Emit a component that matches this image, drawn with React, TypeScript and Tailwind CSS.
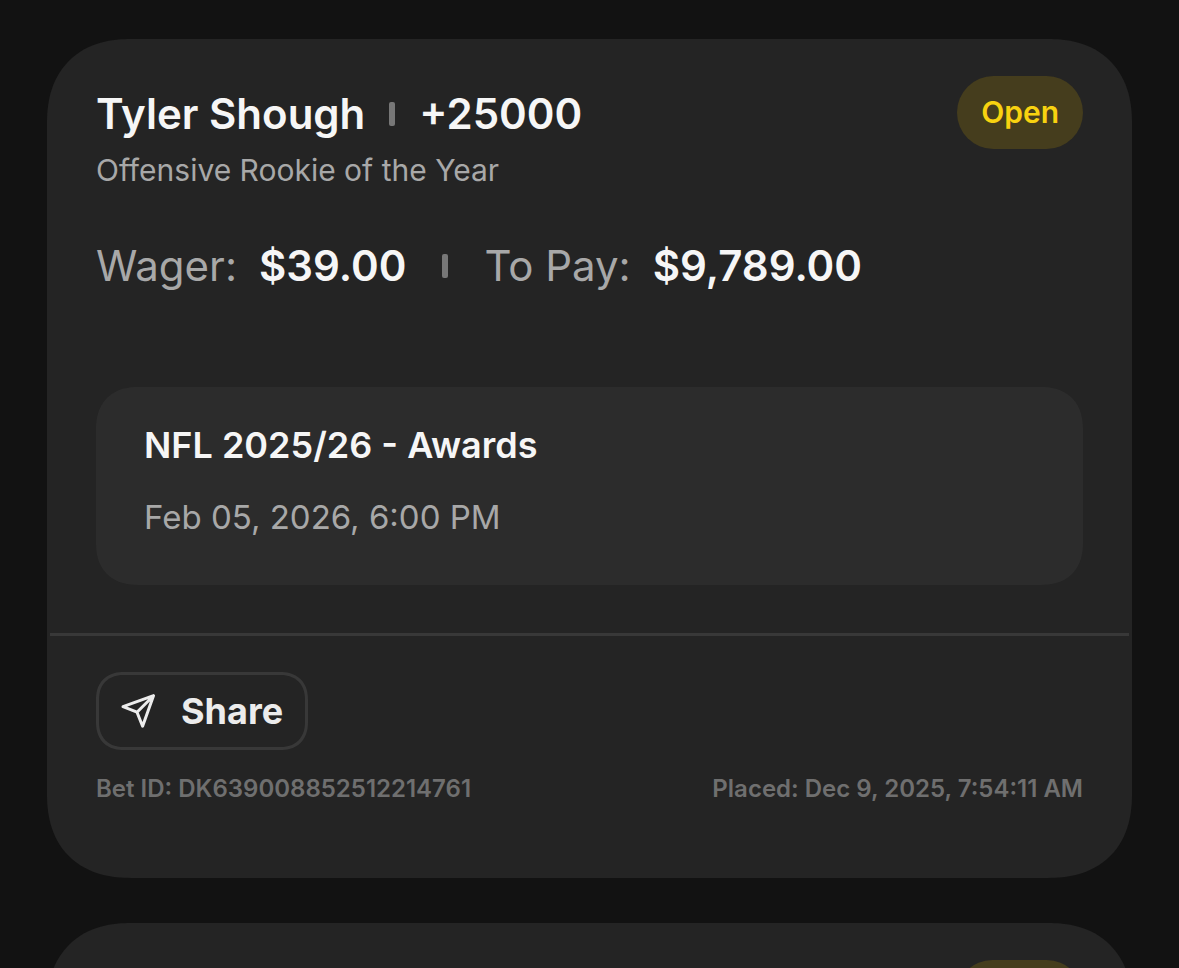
export default function App() {
  return (
    <main className="h-screen overflow-hidden bg-[#121212] px-[47px] pt-[39px] font-['Inter',sans-serif] text-[#f6f6f6]">
      <div className="flex flex-col gap-[45px]">
        <article className="rounded-[84px] bg-[#242424] pb-[74px] [corner-shape:superellipse(1.2)]">
          <div className="px-[49px] pt-[37px]">
            <header className="flex items-start justify-between">
              <div className="pt-3">
                <h2 className="flex items-center text-[42px] leading-[52px] font-semibold">
                  Tyler Shough
                  <span className="mx-6 h-6 w-1.5 rounded-xs bg-[#777777]" />
                  +25000
                </h2>
                <p className="mt-3 text-[30px] leading-9 text-[#a8a8a8]">Offensive Rookie of the Year</p>
              </div>
              <span className="rounded-full bg-[#453d1d] px-6 py-[18px] text-[30px] leading-[37px] font-semibold text-[#f8d210]">Open</span>
            </header>
            <dl className="mt-[52px] flex items-center text-[42px] leading-[52px]">
              <dt className="text-[#a8a8a8]">Wager:</dt>
              <dd className="ml-[22px] font-semibold">$39.00</dd>
              <span className="mx-9 h-6 w-1.5 rounded-xs bg-[#777777]" />
              <dt className="text-[#a8a8a8]">To Pay:</dt>
              <dd className="ml-[22px] font-semibold">$9,789.00</dd>
            </dl>
            <section className="mt-[95px] rounded-[42px] bg-[#2c2c2c] px-12 pt-9 pb-[44px] [corner-shape:superellipse(1.2)]">
              <h3 className="text-[36px] leading-[44px] font-semibold">NFL 2025/26 - Awards</h3>
              <p className="mt-[26px] text-[33px] leading-[48px] text-[#a8a8a8]">Feb 05, 2026, 6:00 PM</p>
            </section>
          </div>
          <hr className="mx-[3px] mt-12 border-t-[3px] border-[#383838]" />
          <footer className="px-[49px] pt-9">
            <button className="flex h-[78px] items-center gap-6 rounded-[28px] border-3 border-[#383838] px-[22px] text-[36px] font-bold text-[#ececec] [corner-shape:superellipse(1.2)]">
              <svg className="size-9" viewBox="0 0 36 36" fill="none" stroke="currentColor" strokeWidth="3" strokeLinejoin="round" strokeLinecap="round">
                <path d="M32.5 2.7 2 13.7l14 5.5 5.6 14Z M32.5 2.7 16 19.2" />
              </svg>
              Share
            </button>
            <div className="mt-6 flex justify-between text-[24px] leading-[30px] font-semibold text-[#6f6f6f]">
              <span>Bet ID: DK639008852512214761</span>
              <span>Placed: Dec 9, 2025, 7:54:11 AM</span>
            </div>
          </footer>
        </article>
        <article className="flex h-[240px] items-start justify-end rounded-[84px] bg-[#242424] px-[49px] pt-[37px] [corner-shape:superellipse(1.2)]">
          <span className="h-[73px] w-[127px] rounded-full bg-[#453d1d]" />
        </article>
      </div>
    </main>
  );
}
